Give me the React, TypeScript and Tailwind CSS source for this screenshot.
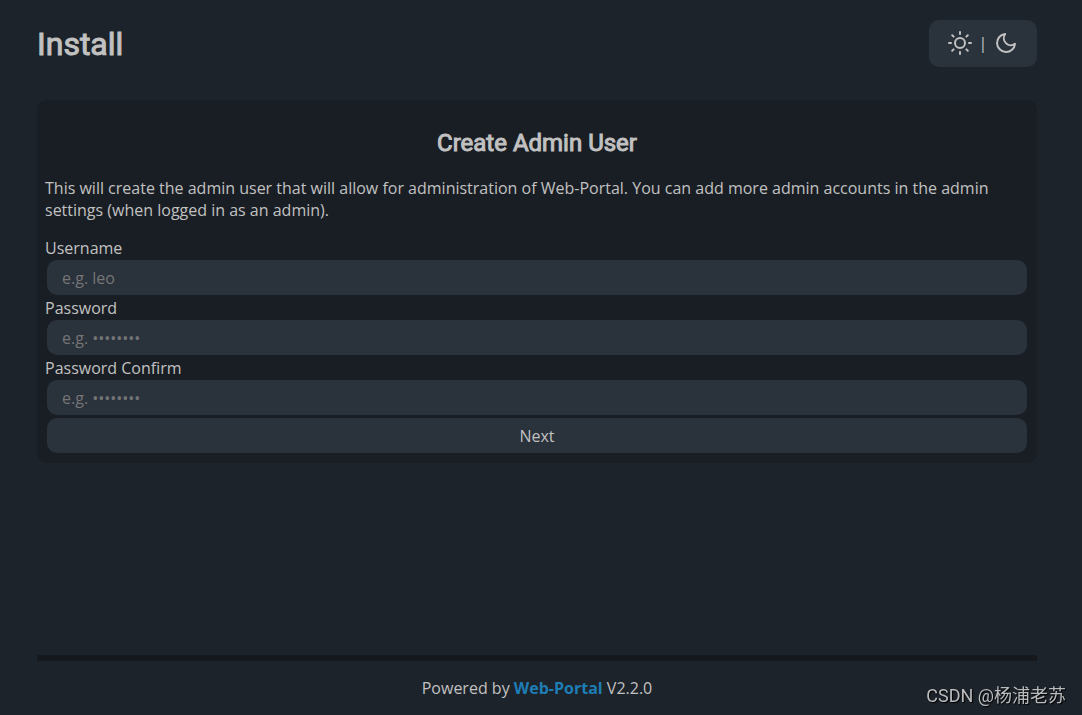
import { FiMoon, FiSun } from "react-icons/fi";

const fields = [
  { id: "username", label: "Username", type: "text", placeholder: "e.g. leo" },
  { id: "password", label: "Password", type: "password", placeholder: "e.g. ••••••••" },
  { id: "password-confirm", label: "Password Confirm", type: "password", placeholder: "e.g. ••••••••" },
];

function Header() {
  return (
    <header className="flex items-center justify-between pt-5">
      <h1 className="font-['Roboto',sans-serif] text-[32px] leading-[46px] font-normal [-webkit-text-stroke:1px_#c1c1c1]">
        Install
      </h1>
      <div className="flex h-[47px] items-center rounded-[10px] bg-[#2a323c] px-[19px] pb-px">
        <button type="button" aria-label="Light theme">
          <FiSun size={24} />
        </button>
        <span className="w-[22px] text-center">|</span>
        <button type="button" aria-label="Dark theme">
          <FiMoon size={24} />
        </button>
      </div>
    </header>
  );
}

function AdminForm() {
  return (
    <main className="mt-[33px] rounded-[10px] bg-[#191e24] px-2 pt-7 pb-2">
      <h2 className="text-center font-['Roboto',sans-serif] text-2xl leading-[30px] font-normal [-webkit-text-stroke:1px_#c1c1c1]">
        Create Admin User
      </h2>
      <p className="mt-[19px] mb-4">
        This will create the admin user that will allow for administration of Web-Portal. You can add more admin
        accounts in the admin settings (when logged in as an admin).
      </p>
      <form>
        {fields.map((field) => (
          <div key={field.id}>
            <label htmlFor={field.id} className="block">
              {field.label}
            </label>
            <input
              id={field.id}
              type={field.type}
              placeholder={field.placeholder}
              className="mx-auto mt-px mb-[2px] block h-[35px] w-[calc(100%-4px)] rounded-[10px] bg-[#2a323c] px-[15px] placeholder:text-[#757575]"
            />
          </div>
        ))}
        <button
          type="submit"
          className="mx-auto mt-[3px] mb-[2px] block h-[35px] w-[calc(100%-4px)] rounded-[10px] bg-[#2a323c]"
        >
          Next
        </button>
      </form>
    </main>
  );
}

export default function App() {
  return (
    <div className="min-h-screen bg-[#1d232a] pr-2 font-['Open_Sans',sans-serif] text-base leading-[22px] text-[#c1c1c1]">
      <div className="mx-auto flex min-h-screen w-[94%] max-w-[1000px] flex-col">
        <Header />
        <AdminForm />
        <footer className="mt-auto border-t-6 border-[#15191e] pt-4 pb-4 text-center">
          Powered by{" "}
          <a href="#" className="font-bold text-[#1d7db5]">
            Web-Portal
          </a>{" "}
          V2.2.0
        </footer>
      </div>
      {/* Watermark */}
      <div className="fixed right-4 bottom-2 font-['Roboto','Noto_Sans_CJK_SC',sans-serif] text-lg leading-[22px] text-[#b9bbbd] [text-shadow:1px_1px_1px_#000]">
        CSDN @杨浦老苏
      </div>
    </div>
  );
}
